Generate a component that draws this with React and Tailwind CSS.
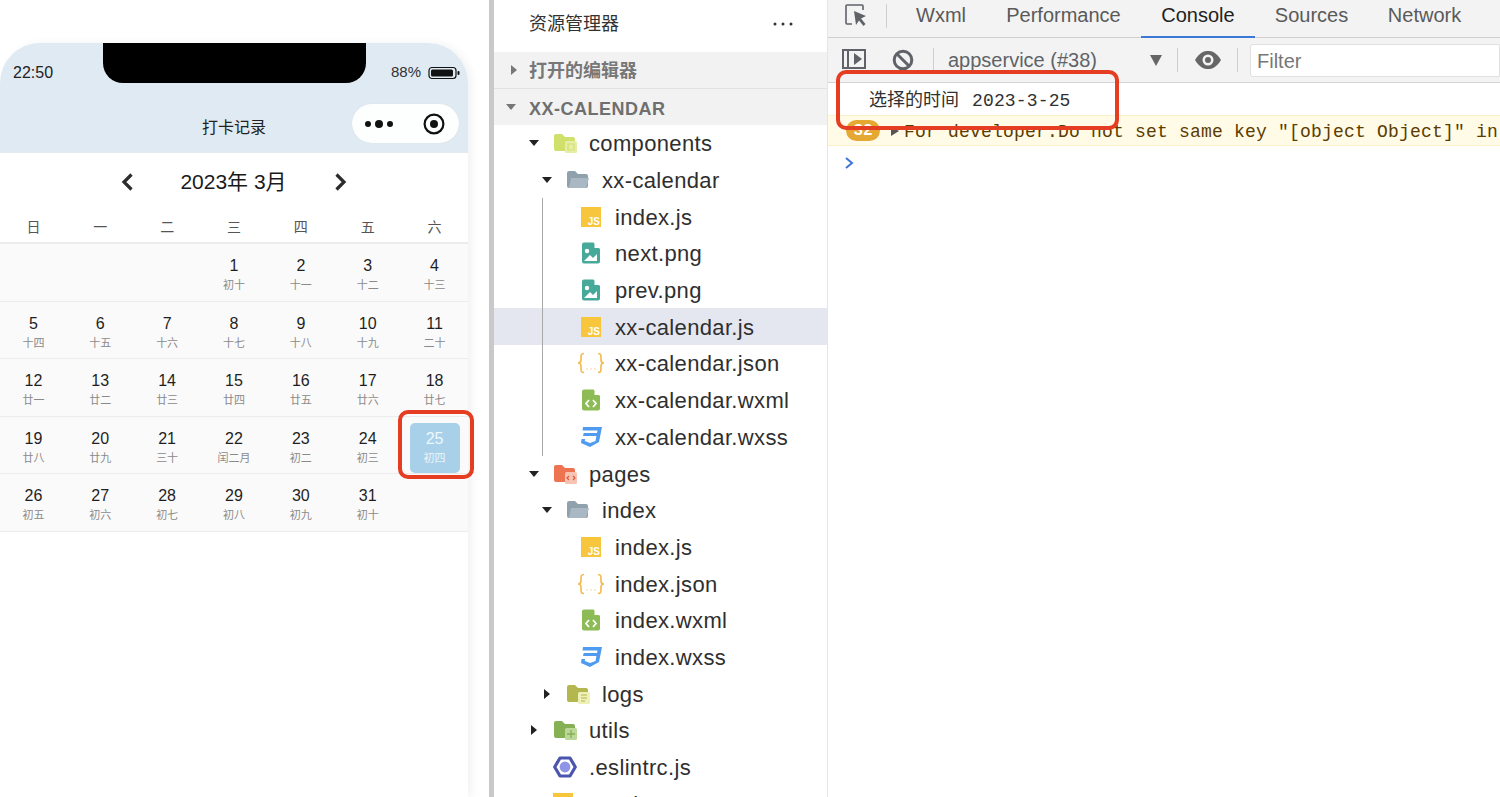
const SANS = { fontFamily: '"Liberation Sans","Noto Sans CJK SC",sans-serif' };

const weekdays = ['日', '一', '二', '三', '四', '五', '六'];
const weeks = [
  [null, null, null, ['1', '初十'], ['2', '十一'], ['3', '十二'], ['4', '十三']],
  [['5', '十四'], ['6', '十五'], ['7', '十六'], ['8', '十七'], ['9', '十八'], ['10', '十九'], ['11', '二十']],
  [['12', '廿一'], ['13', '廿二'], ['14', '廿三'], ['15', '廿四'], ['16', '廿五'], ['17', '廿六'], ['18', '廿七']],
  [['19', '廿八'], ['20', '廿九'], ['21', '三十'], ['22', '闰二月'], ['23', '初二'], ['24', '初三'], ['25', '初四', true]],
  [['26', '初五'], ['27', '初六'], ['28', '初七'], ['29', '初八'], ['30', '初九'], ['31', '初十'], null],
];

function Battery() {
  return (
    <svg width="32" height="14" viewBox="0 0 32 14">
      <rect x="1" y="1.5" width="27" height="11" rx="3" fill="none" stroke="#111" strokeWidth="1.2" />
      <rect x="3" y="3.5" width="22" height="7" rx="1.5" fill="#111" />
      <rect x="29.5" y="5" width="2" height="4" rx="1" fill="#111" />
    </svg>
  );
}

function Capsule() {
  return (
    <div className="flex h-[39px] w-[107px] items-center justify-between rounded-full bg-[#fdfefe] pl-[12px] pr-[14px] shadow-[0_0_1px_#c8d2da]">
      <svg width="30" height="10" viewBox="0 0 30 10">
        <circle cx="4" cy="5" r="3" fill="#111" />
        <circle cx="15" cy="5" r="4" fill="#111" />
        <circle cx="26" cy="5" r="3" fill="#111" />
      </svg>
      <svg width="22" height="22" viewBox="0 0 22 22">
        <circle cx="11" cy="11" r="9.4" fill="none" stroke="#111" strokeWidth="2.2" />
        <circle cx="11" cy="11" r="4" fill="#111" />
      </svg>
    </div>
  );
}

function Chevron({ dir }) {
  return (
    <svg width="14" height="20" viewBox="0 0 14 20">
      <path d={dir === 'left' ? 'M11.5 2.5 L4 10 L11.5 17.5' : 'M2.5 2.5 L10 10 L2.5 17.5'} fill="none" stroke="#2c2c2c" strokeWidth="3.2" />
    </svg>
  );
}

function DayCell({ day }) {
  if (!day) return <div />;
  const [num, lunar, selected] = day;
  return (
    <div className="flex items-start justify-center pt-[6px]">
      <div className={selected ? 'flex h-[50px] w-[50px] flex-col items-center rounded-[5px] bg-[#a8d1e9] pt-[6px]' : 'flex h-[50px] w-[50px] flex-col items-center pt-[6px]'}>
        <span className={selected ? 'text-[16px] leading-[20px] text-[#eef7fc]' : 'text-[16px] leading-[20px] text-[#1f1f1f]'}>{num}</span>
        <span className={selected ? 'whitespace-nowrap text-[11px] leading-[18px] text-[#e8f4fb]' : 'whitespace-nowrap text-[11px] leading-[18px] text-[#8a8a8a]'}>{lunar}</span>
      </div>
    </div>
  );
}

function Phone() {
  return (
    <div className="relative h-full w-[489px] shrink-0 bg-white pt-[43px]" style={SANS}>
      <div className="h-full w-[468px] overflow-hidden rounded-t-[40px] bg-white shadow-[4px_0_8px_rgba(0,0,0,0.05)]">
        <div className="relative h-[110px] bg-[#e0eaf3]">
          <div className="absolute left-[103px] top-0 h-[40px] w-[263px] rounded-b-[20px] bg-black" />
          <div className="flex h-[58px] items-center justify-between pl-[13px] pr-[8px] pt-[1px]">
            <span className="text-[16px] text-[#222]">22:50</span>
            <div className="flex items-center gap-[7px]">
              <span className="text-[15px] text-[#333]">88%</span>
              <Battery />
            </div>
          </div>
          <div className="relative flex h-[42px] items-center justify-center">
            <span className="mt-[12px] text-[16px] text-[#222]">打卡记录</span>
            <div className="absolute right-[9px] top-[3px]"><Capsule /></div>
          </div>
        </div>
        <div className="flex h-[58px] items-center justify-center">
          <Chevron dir="left" />
          <span className="ml-[46px] mr-[47px] text-[21px] text-[#1a1a1a]">2023年 3月</span>
          <Chevron dir="right" />
        </div>
        <div className="grid h-[33px] grid-cols-7 border-b-2 border-[#ececec] text-center">
          {weekdays.map((d) => (
            <span key={d} className="pt-[5px] text-[14px] leading-[22px] text-[#555]">{d}</span>
          ))}
        </div>
        <div className="bg-[#fafafa]">
          {weeks.map((w, i) => (
            <div key={i} className="grid h-[57.6px] grid-cols-7 border-b border-[#ececec]">
              {w.map((d, j) => <DayCell key={j} day={d} />)}
            </div>
          ))}
        </div>
      </div>
      <div className="absolute left-[398px] top-[410px] h-[69px] w-[76px] rounded-[10px] border-[4px] border-[#e53d22]" />
    </div>
  );
}

function Caret({ open, color = '#222' }) {
  return (
    <svg width="10" height="10" viewBox="0 0 10 10">
      <path d={open ? 'M0 2 H10 L5 8 Z' : 'M2 0 V10 L8 5 Z'} fill={color} />
    </svg>
  );
}

function FolderIcon({ kind }) {
  const base = { components: '#cfe16a', plain: '#8fa1ad', pages: '#ee7350', logs: '#b4b64e', utils: '#86b054' }[kind];
  const badge = { components: '#e6eda8', pages: '#f7c4b4', logs: '#eef0b8', utils: '#bcd79a' }[kind];
  return (
    <svg width="24" height="22" viewBox="0 0 24 22">
      <path d="M1 4 a2 2 0 0 1 2-2 h6 l3 3 h8 a2 2 0 0 1 2 2 v10 a2 2 0 0 1-2 2 H3 a2 2 0 0 1-2-2 Z" fill={base} />
      {kind === 'plain' && <path d="M5 9 H23 L20 19 H3 Z" fill="#a9b8c2" />}
      {badge && <rect x="12" y="9" width="12" height="12" rx="1.5" fill={badge} />}
      {kind === 'pages' && <path d="M16 13 l-2 2 l2 2 M20 13 l2 2 l-2 2" stroke="#e0563a" strokeWidth="1.2" fill="none" />}
      {kind === 'logs' && <path d="M15 12 h6 M15 15 h6 M15 18 h4" stroke="#b4b64e" strokeWidth="1.2" />}
      {kind === 'utils' && <path d="M18 11 v8 M14 15 h8" stroke="#86b054" strokeWidth="1.3" />}
      {kind === 'components' && <path d="M15 12 h6 v6 h-6 Z" fill="none" stroke="#cfe16a" strokeWidth="1.2" />}
    </svg>
  );
}

function FileIcon({ kind }) {
  if (kind === 'js') {
    return (
      <svg className="ml-[2px]" width="20" height="20" viewBox="0 0 20 20">
        <rect width="20" height="20" fill="#f8c63d" />
        <text x="19" y="18" textAnchor="end" fontSize="10" fontWeight="700" fill="#fff" fontFamily="Liberation Sans">JS</text>
      </svg>
    );
  }
  if (kind === 'json') {
    return (
      <svg className="-ml-[2px]" width="28" height="22" viewBox="0 0 28 22">
        <path d="M7 1.5 C4 1.5 4 3 4 6 V8 C4 10 3 11 1 11 C3 11 4 12 4 14 V16 C4 19 4 20.5 7 20.5 M21 1.5 C24 1.5 24 3 24 6 V8 C24 10 25 11 27 11 C25 11 24 12 24 14 V16 C24 19 24 20.5 21 20.5" fill="none" stroke="#f3bd55" strokeWidth="1.7" />
        <circle cx="10" cy="17" r="0.8" fill="#f3d48f" />
        <circle cx="14" cy="17" r="0.8" fill="#f3d48f" />
        <circle cx="18" cy="17" r="0.8" fill="#f3d48f" />
      </svg>
    );
  }
  if (kind === 'png' || kind === 'wxml') {
    const c = kind === 'png' ? '#46a99a' : '#8dbb55';
    return (
      <svg className="ml-[2px]" width="20" height="22" viewBox="0 0 20 22">
        <path d="M3 0.5 h9.5 l6.5 6.5 v12.5 a2 2 0 0 1-2 2 H3 a2 2 0 0 1-2-2 V2.5 a2 2 0 0 1 2-2 Z" fill={c} />
        <path d="M13.5 1 l5 5 h-5 Z" fill="#fff" />
        {kind === 'png' ? (
          <>
            <circle cx="6" cy="9" r="2.2" fill="#fff" />
            <path d="M3 19 L9 13 L12 16 L16 12 V19 Z" fill="#fff" />
          </>
        ) : (
          <path d="M8 11 l-3 3.5 l3 3.5 M12 11 l3 3.5 l-3 3.5" fill="none" stroke="#fff" strokeWidth="1.8" />
        )}
      </svg>
    );
  }
  if (kind === 'wxss') {
    return (
      <svg className="ml-[1px]" width="22" height="22" viewBox="0 0 22 22">
        <path d="M3 1 H22 L19 16 L10 21 L1 17 L1.6 13 H5 L4.8 15 L10 17 L15.5 15 L16.4 10 H3 L3.7 7 H17 L17.5 4.5 H2.5 Z" fill="#4e9bf0" />
      </svg>
    );
  }
  if (kind === 'eslint') {
    return (
      <svg width="24" height="22" viewBox="0 0 24 22">
        <path d="M7 2 H17 L22.3 11 L17 20 H7 L1.7 11 Z" fill="#fff" stroke="#4b55b0" strokeWidth="3.2" strokeLinejoin="round" />
        <circle cx="12" cy="11" r="5.4" fill="#8f95e4" />
      </svg>
    );
  }
  return null;
}

const tree = [
  ['folder', 'components', 'components', 0, true],
  ['folder', 'plain', 'xx-calendar', 1, true],
  ['file', 'js', 'index.js', 2],
  ['file', 'png', 'next.png', 2],
  ['file', 'png', 'prev.png', 2],
  ['file', 'js', 'xx-calendar.js', 2, false, true],
  ['file', 'json', 'xx-calendar.json', 2],
  ['file', 'wxml', 'xx-calendar.wxml', 2],
  ['file', 'wxss', 'xx-calendar.wxss', 2],
  ['folder', 'pages', 'pages', 0, true],
  ['folder', 'plain', 'index', 1, true],
  ['file', 'js', 'index.js', 2],
  ['file', 'json', 'index.json', 2],
  ['file', 'wxml', 'index.wxml', 2],
  ['file', 'wxss', 'index.wxss', 2],
  ['folder', 'logs', 'logs', 1, false],
  ['folder', 'utils', 'utils', 0, false],
  ['file', 'eslint', '.eslintrc.js', 0],
];
const indents = ['pl-[35px]', 'pl-[48px]', 'pl-[85px]'];

function TreeRow({ row }) {
  const [type, kind, name, depth, open, selected] = row;
  const isFile = type === 'file';
  return (
    <div className={`flex h-[36.7px] items-center ${indents[depth]} ${selected ? 'bg-[#e5e7f0]' : ''}`}>
      {isFile && depth === 0 && <span className="w-[24px] shrink-0" />}
      {!isFile && <span className="flex w-[24px] shrink-0 items-center"><Caret open={open} /></span>}
      <span className="flex w-[36px] shrink-0 items-center">
        {isFile ? <FileIcon kind={kind} /> : <FolderIcon kind={kind} />}
      </span>
      <span className="mt-[1px] text-[22px] tracking-[0.35px] text-[#2f2f2f]">{name}</span>
    </div>
  );
}

function Explorer() {
  return (
    <div className="flex h-full w-[338px] shrink-0 border-l-[5px] border-[#c9c9c9] bg-white" style={SANS}>
      <div className="relative w-[333px] shrink-0 overflow-hidden">
        <div className="flex h-[52px] items-center justify-between pb-[4px] pl-[35px] pr-[34px]">
          <span className="text-[18px] text-[#333]">资源管理器</span>
          <svg width="20" height="4" viewBox="0 0 20 4">
            <circle cx="2" cy="2" r="1.5" fill="#333" />
            <circle cx="10" cy="2" r="1.5" fill="#333" />
            <circle cx="18" cy="2" r="1.5" fill="#333" />
          </svg>
        </div>
        <div className="flex h-[37px] items-center border-b border-[#e2e2e2] bg-[#f2f2f2] pl-[15px]">
          <span className="w-[20px]"><Caret color="#777" /></span>
          <span className="mt-[2px] text-[18px] font-bold text-[#777]">打开的编辑器</span>
        </div>
        <div className="flex h-[36px] items-center bg-[#f2f2f2] pl-[12px]">
          <span className="w-[23px]"><Caret open color="#777" /></span>
          <span className="mt-[5px] text-[18px] font-bold tracking-[0.5px] text-[#6f6f6f]">XX-CALENDAR</span>
        </div>
        <div className="relative">
          {tree.map((r, i) => <TreeRow key={i} row={r} />)}
          <div className="flex h-[36.7px] items-center pl-[59px]">
            <span className="h-[22px] w-[20px] bg-[#f8c63d]" />
            <span className="ml-[16px] mt-[1px] text-[22px] tracking-[0.35px] text-[#2f2f2f]">app.js</span>
          </div>
          <div className="absolute left-[48px] top-[73px] h-[258px] w-[1px] bg-[#a8a8a8]" />
        </div>
      </div>
    </div>
  );
}

function DevTools() {
  const tabs = [['Wxml', 'w-[90px]'], ['Performance', 'w-[155px]'], ['Console', 'w-[114px]'], ['Sources', 'w-[113px]'], ['Network', 'w-[113px]']];
  return (
    <div className="relative h-full flex-1 overflow-hidden bg-white" style={SANS}>
      <div className="flex h-[38px] items-center border-b border-[#cfcfcf] bg-[#f3f3f3]">
        <div className="flex h-full w-[58px] items-start pl-[16px] pt-[3px]">
          <svg width="26" height="26" viewBox="0 0 26 26">
            <path d="M8 21 H3 a1 1 0 0 1-1-1 V3 a1 1 0 0 1 1-1 H18 a1 1 0 0 1 1 1 V7" fill="none" stroke="#5f6368" strokeWidth="1.6" />
            <path d="M10 8 L22 13 L17 15.5 L21.5 21 L19.5 23 L15 17.5 L12 22 Z" fill="#5f6368" />
          </svg>
        </div>
        <div className="mb-[6px] h-[24px] w-[1px] bg-[#cfcfcf]" />
        <div className="flex h-full pl-[9px]">
          {tabs.map(([t, w]) => (
            <div key={t} className={`relative flex h-full items-center justify-center pb-[7px] ${w}`}>
              <span className={t === 'Console' ? 'text-[20px] text-[#222]' : 'text-[20px] text-[#5a5a5a]'}>{t}</span>
              {t === 'Console' && <span className="absolute inset-x-0 bottom-[-1px] h-[2px] bg-[#3c78d8]" />}
            </div>
          ))}
        </div>
      </div>
      <div className="flex h-[45px] items-center border-b border-[#d4d4d4] bg-[#f3f3f3]">
        <div className="ml-[14px] mb-[2px] flex h-[20px] w-[24px] items-center justify-center border-2 border-[#5f6368]">
          <div className="mr-auto h-full w-[5px] border-r-2 border-[#5f6368]" />
          <div className="mr-[2px] h-0 w-0 border-y-[6px] border-l-[8px] border-y-transparent border-l-[#5f6368]" />
        </div>
        <svg className="ml-[26px]" width="22" height="22" viewBox="0 0 22 22">
          <circle cx="11" cy="11" r="8.8" fill="none" stroke="#5f6368" strokeWidth="3" />
          <path d="M5 5 L17 17" stroke="#5f6368" strokeWidth="3" />
        </svg>
        <div className="ml-[19px] h-[24px] w-[1px] bg-[#cfcfcf]" />
        <span className="ml-[14px] w-[202px] text-[20px] text-[#5f6368]">appservice (#38)</span>
        <div className="h-0 w-0 border-x-[6px] border-t-[11px] border-x-transparent border-t-[#666]" />
        <div className="ml-[15px] h-[24px] w-[1px] bg-[#cfcfcf]" />
        <svg className="ml-[16px]" width="28" height="20" viewBox="0 0 28 20">
          <path d="M1 10 C6 2 10 1 14 1 C18 1 22 2 27 10 C22 18 18 19 14 19 C10 19 6 18 1 10 Z" fill="#666" />
          <circle cx="14" cy="10" r="5.5" fill="#f3f3f3" />
          <circle cx="14" cy="10" r="3" fill="#666" />
        </svg>
        <div className="ml-[15px] h-[24px] w-[1px] bg-[#cfcfcf]" />
        <div className="ml-[12px] mt-[1px] flex h-[33px] flex-1 items-center rounded-l-[3px] border border-[#e0e0e0] bg-white pl-[6px]">
          <span className="text-[20px] text-[#777]">Filter</span>
        </div>
      </div>
      <div className="flex h-[32px] items-center pl-[41px] pt-[5px]" style={{ fontFamily: '"Liberation Mono","Noto Sans CJK SC",monospace' }}>
        <span className="whitespace-pre text-[18px] text-[#303030]">选择的时间</span>
        <span className="ml-[13px] whitespace-pre text-[18px] tracking-[0.15px] text-[#303030]">2023-3-25</span>
      </div>
      <div className="flex h-[31px] items-center whitespace-nowrap border-y border-[#fbf1c8] bg-[#fffbe6] pl-[18px]" style={{ fontFamily: '"Liberation Mono",monospace' }}>
        <span className="flex h-[21px] w-[34px] shrink-0 items-center justify-center rounded-full bg-[#e5a832] text-[16px] font-bold text-white">32</span>
        <span className="ml-[11px] h-0 w-0 border-y-[5px] border-l-[8px] border-y-transparent border-l-[#555]" />
        <span className="ml-[5px] mt-[3px] text-[18px] tracking-[0.2px] text-[#5c3c00]">For developer:Do not set same key "[object Object]" in</span>
      </div>
      <div className="flex h-[34px] items-center pl-[16px]">
        <svg width="10" height="14" viewBox="0 0 10 14">
          <path d="M2 2 L8 7 L2 12" fill="none" stroke="#3f73d8" strokeWidth="2" />
        </svg>
      </div>
      <div className="absolute left-[8px] top-[70px] h-[60px] w-[283px] rounded-[10px] border-[4px] border-[#e53d22]" />
    </div>
  );
}

export default function App() {
  return (
    <div className="flex h-[797px] w-[1500px] overflow-hidden bg-white">
      <Phone />
      <Explorer />
      <div className="w-[1px] shrink-0 bg-[#e5e5e5]" />
      <DevTools />
    </div>
  );
}
